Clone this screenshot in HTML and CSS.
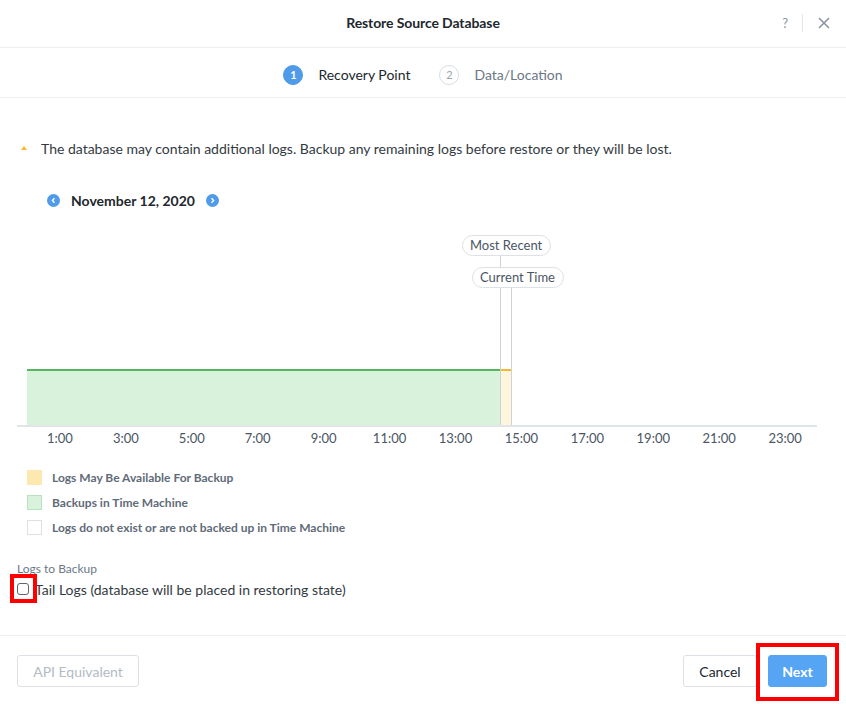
FILE: index.html
```html
<!DOCTYPE html>
<html>
<head>
<meta charset="utf-8">
<link rel="stylesheet" href="styles.css">
</head>
<body>
<div class="modal">
  <header class="hdr">
    <div class="title">Restore Source Database</div>
    <div class="hdr-actions">
      <span class="help">?</span>
      <span class="sep"></span>
      <svg class="close" width="12" height="12" viewBox="0 0 12 12"><path d="M1 1L11 11M11 1L1 11" stroke="#8a94a0" stroke-width="1.6" fill="none"/></svg>
    </div>
  </header>
  <nav class="steps">
    <div class="step active"><span class="num">1</span><span class="lbl">Recovery Point</span></div>
    <div class="step"><span class="num">2</span><span class="lbl">Data/Location</span></div>
  </nav>
  <main class="content">
    <div class="warn"><span class="tri"></span><span>The database may contain additional logs. Backup any remaining logs before restore or they will be lost.</span></div>
    <div class="date">
      <span class="nav-btn"><svg width="13" height="13" viewBox="0 0 13 13"><circle cx="6.5" cy="6.5" r="6.5" fill="#4f9bea"/><path d="M7.5 4.3L5.4 6.5L7.5 8.7" stroke="#fff" stroke-width="1.4" fill="none"/></svg></span>
      <span class="date-txt">November 12, 2020</span>
      <span class="nav-btn"><svg width="13" height="13" viewBox="0 0 13 13"><circle cx="6.5" cy="6.5" r="6.5" fill="#4f9bea"/><path d="M5.5 4.3L7.6 6.5L5.5 8.7" stroke="#fff" stroke-width="1.4" fill="none"/></svg></span>
    </div>
    <div class="chart">
      <div class="plot">
        <div class="green" style="width:473px"></div>
        <div class="yellow" style="left:473px;width:11px"></div>
        <div class="vline" style="left:473px;top:26px"></div>
        <div class="vline" style="left:484px;top:58px"></div>
        <div class="tag" style="left:435px;top:5px">Most Recent</div>
        <div class="tag" style="left:445px;top:37px">Current Time</div>
      </div>
      <div class="axis"></div>
      <div class="ticks">
        <span>1:00</span><span>3:00</span><span>5:00</span><span>7:00</span><span>9:00</span><span>11:00</span><span>13:00</span><span>15:00</span><span>17:00</span><span>19:00</span><span>21:00</span><span>23:00</span>
      </div>
    </div>
    <ul class="legend">
      <li><span class="sw sw-y"></span>Logs May Be Available For Backup</li>
      <li><span class="sw sw-g"></span>Backups in Time Machine</li>
      <li><span class="sw sw-w"></span>Logs do not exist or are not backed up in Time Machine</li>
    </ul>
    <div class="logs-label">Logs to Backup</div>
    <label class="tail"><span class="cb-wrap"><span class="cb"></span><span class="hl hl-cb"></span></span>Tail Logs (database will be placed in restoring state)</label>
  </main>
  <footer class="ftr">
    <button class="btn btn-api">API Equivalent</button>
    <div class="ftr-right">
      <button class="btn btn-cancel">Cancel</button>
      <span class="next-wrap"><button class="btn btn-next">Next</button><span class="hl hl-next"></span></span>
    </div>
  </footer>
</div>
</body>
</html>
```
FILE: styles.css
```css
* { box-sizing: border-box; }
html, body { margin: 0; padding: 0; background: #fff; }
body { font-family: Lato, "Open Sans", sans-serif; color: #22272e; width: 846px; height: 704px; overflow: hidden; }
.modal { width: 846px; }

.hdr { height: 48px; border-bottom: 1px solid #eceef0; display: flex; align-items: center; justify-content: center; position: relative; }
.title { font-size: 14px; font-weight: 700; color: #22272e; letter-spacing: -0.1px; margin-top: -2px; }
.hdr-actions { position: absolute; right: 16px; top: 14px; display: flex; align-items: center; height: 18px; }
.help { font-size: 13px; color: #8a94a0; margin-right: 14px; }
.sep { width: 1px; height: 18px; background: #e3e6ea; margin-right: 15px; }
.close { display: block; }

.steps { height: 50px; border-bottom: 1px solid #eceef0; display: flex; justify-content: center; align-items: center; gap: 29px; padding-top: 4px; }
.step { display: flex; align-items: center; font-size: 14px; color: #6b7785; }
.step .num { width: 20px; height: 20px; border-radius: 50%; border: 1.5px solid #d8dde2; display: flex; align-items: center; justify-content: center; font-size: 11px; color: #9aa3ad; margin-right: 15px; }
.step.active { color: #22272e; }
.step.active .num { background: #4f9bea; border-color: #4f9bea; color: #fff; font-weight: 700; }

.content { padding: 40px 17px 0; height: 537px; }
.warn { display: flex; align-items: center; font-size: 14px; color: #333a42; height: 20px; }
.tri { width: 0; height: 0; border-left: 3px solid transparent; border-right: 3px solid transparent; border-bottom: 4px solid #f5b82e; margin: 0 14px 0 4px; }

.date { display: flex; align-items: center; margin-top: 32px; padding-left: 30px; height: 20px; }
.nav-btn { display: flex; }
.date-txt { font-size: 14px; font-weight: 700; margin: 0 11px 0 11px; color: #22272e; }

.chart { margin-top: 20px; }
.plot { position: relative; height: 195px; margin-left: 10px; width: 791px; }
.green { position: absolute; left: 0; bottom: 0; height: 56px; background: #d9f2db; border-top: 2px solid #56b65f; }
.yellow { position: absolute; bottom: 0; height: 56px; background: #fdf5de; border-top: 2px solid #f5b82e; }
.vline { position: absolute; bottom: 0; width: 1px; background: #cfd3d8; }
.tag { position: absolute; height: 21px; padding: 0 8px 0 7px; border: 1px solid #dde1e5; border-radius: 11px; background: #fff; font-size: 13px; color: #4a5563; line-height: 19px; white-space: nowrap; }
.axis { height: 2px; background: #e1e4e8; width: 800px; }
.ticks { display: flex; margin-left: 10px; width: 791px; margin-top: 2px; }
.ticks span { flex: 1; text-align: center; font-size: 13px; color: #4a5563; line-height: 18px; }

.legend { list-style: none; padding: 0; margin: 23px 0 0 10px; }
.legend li { display: flex; align-items: center; height: 15px; margin-bottom: 10px; font-size: 12px; font-weight: 700; color: #5f6b78; }
.sw { width: 15px; height: 15px; margin-right: 10px; border: 1px solid transparent; }
.sw-y { background: #fde9b0; border-color: #fde9b0; }
.sw-g { background: #d9f2db; border-color: #b8e2bc; }
.sw-w { background: #fff; border-color: #dde1e5; }

.logs-label { margin-top: 27px; font-size: 12px; color: #6b7785; line-height: 14px; }
.tail { display: flex; align-items: center; margin-top: 5px; font-size: 14px; color: #333a42; height: 16px; }
.cb-wrap { position: relative; display: flex; margin-right: 6px; }
.cb { width: 12px; height: 12px; border: 1px solid #5d6670; border-radius: 3px; background: #fff; }
.hl { position: absolute; border: 4px solid #f00; }
.hl-cb { left: -7px; top: -9px; width: 27px; height: 29px; }

.ftr { border-top: 1px solid #eceef0; height: 69px; display: flex; justify-content: space-between; align-items: flex-start; padding: 19px 19px 0 17px; }
.btn { font-family: inherit; font-size: 14px; height: 32px; border-radius: 3px; border: 1px solid #dde1e5; background: #fff; padding: 0 15px; cursor: pointer; }
.btn-api { color: #b3bbc4; width: 122px; }
.btn-cancel { color: #22272e; width: 74px; margin-right: 11px; }
.ftr-right { display: flex; }
.next-wrap { position: relative; display: flex; }
.btn-next { background: #56a5f4; border-color: #56a5f4; color: #fff; font-weight: 700; width: 59px; padding: 0; }
.hl-next { left: -12px; top: -12px; width: 83px; height: 58px; }
```
